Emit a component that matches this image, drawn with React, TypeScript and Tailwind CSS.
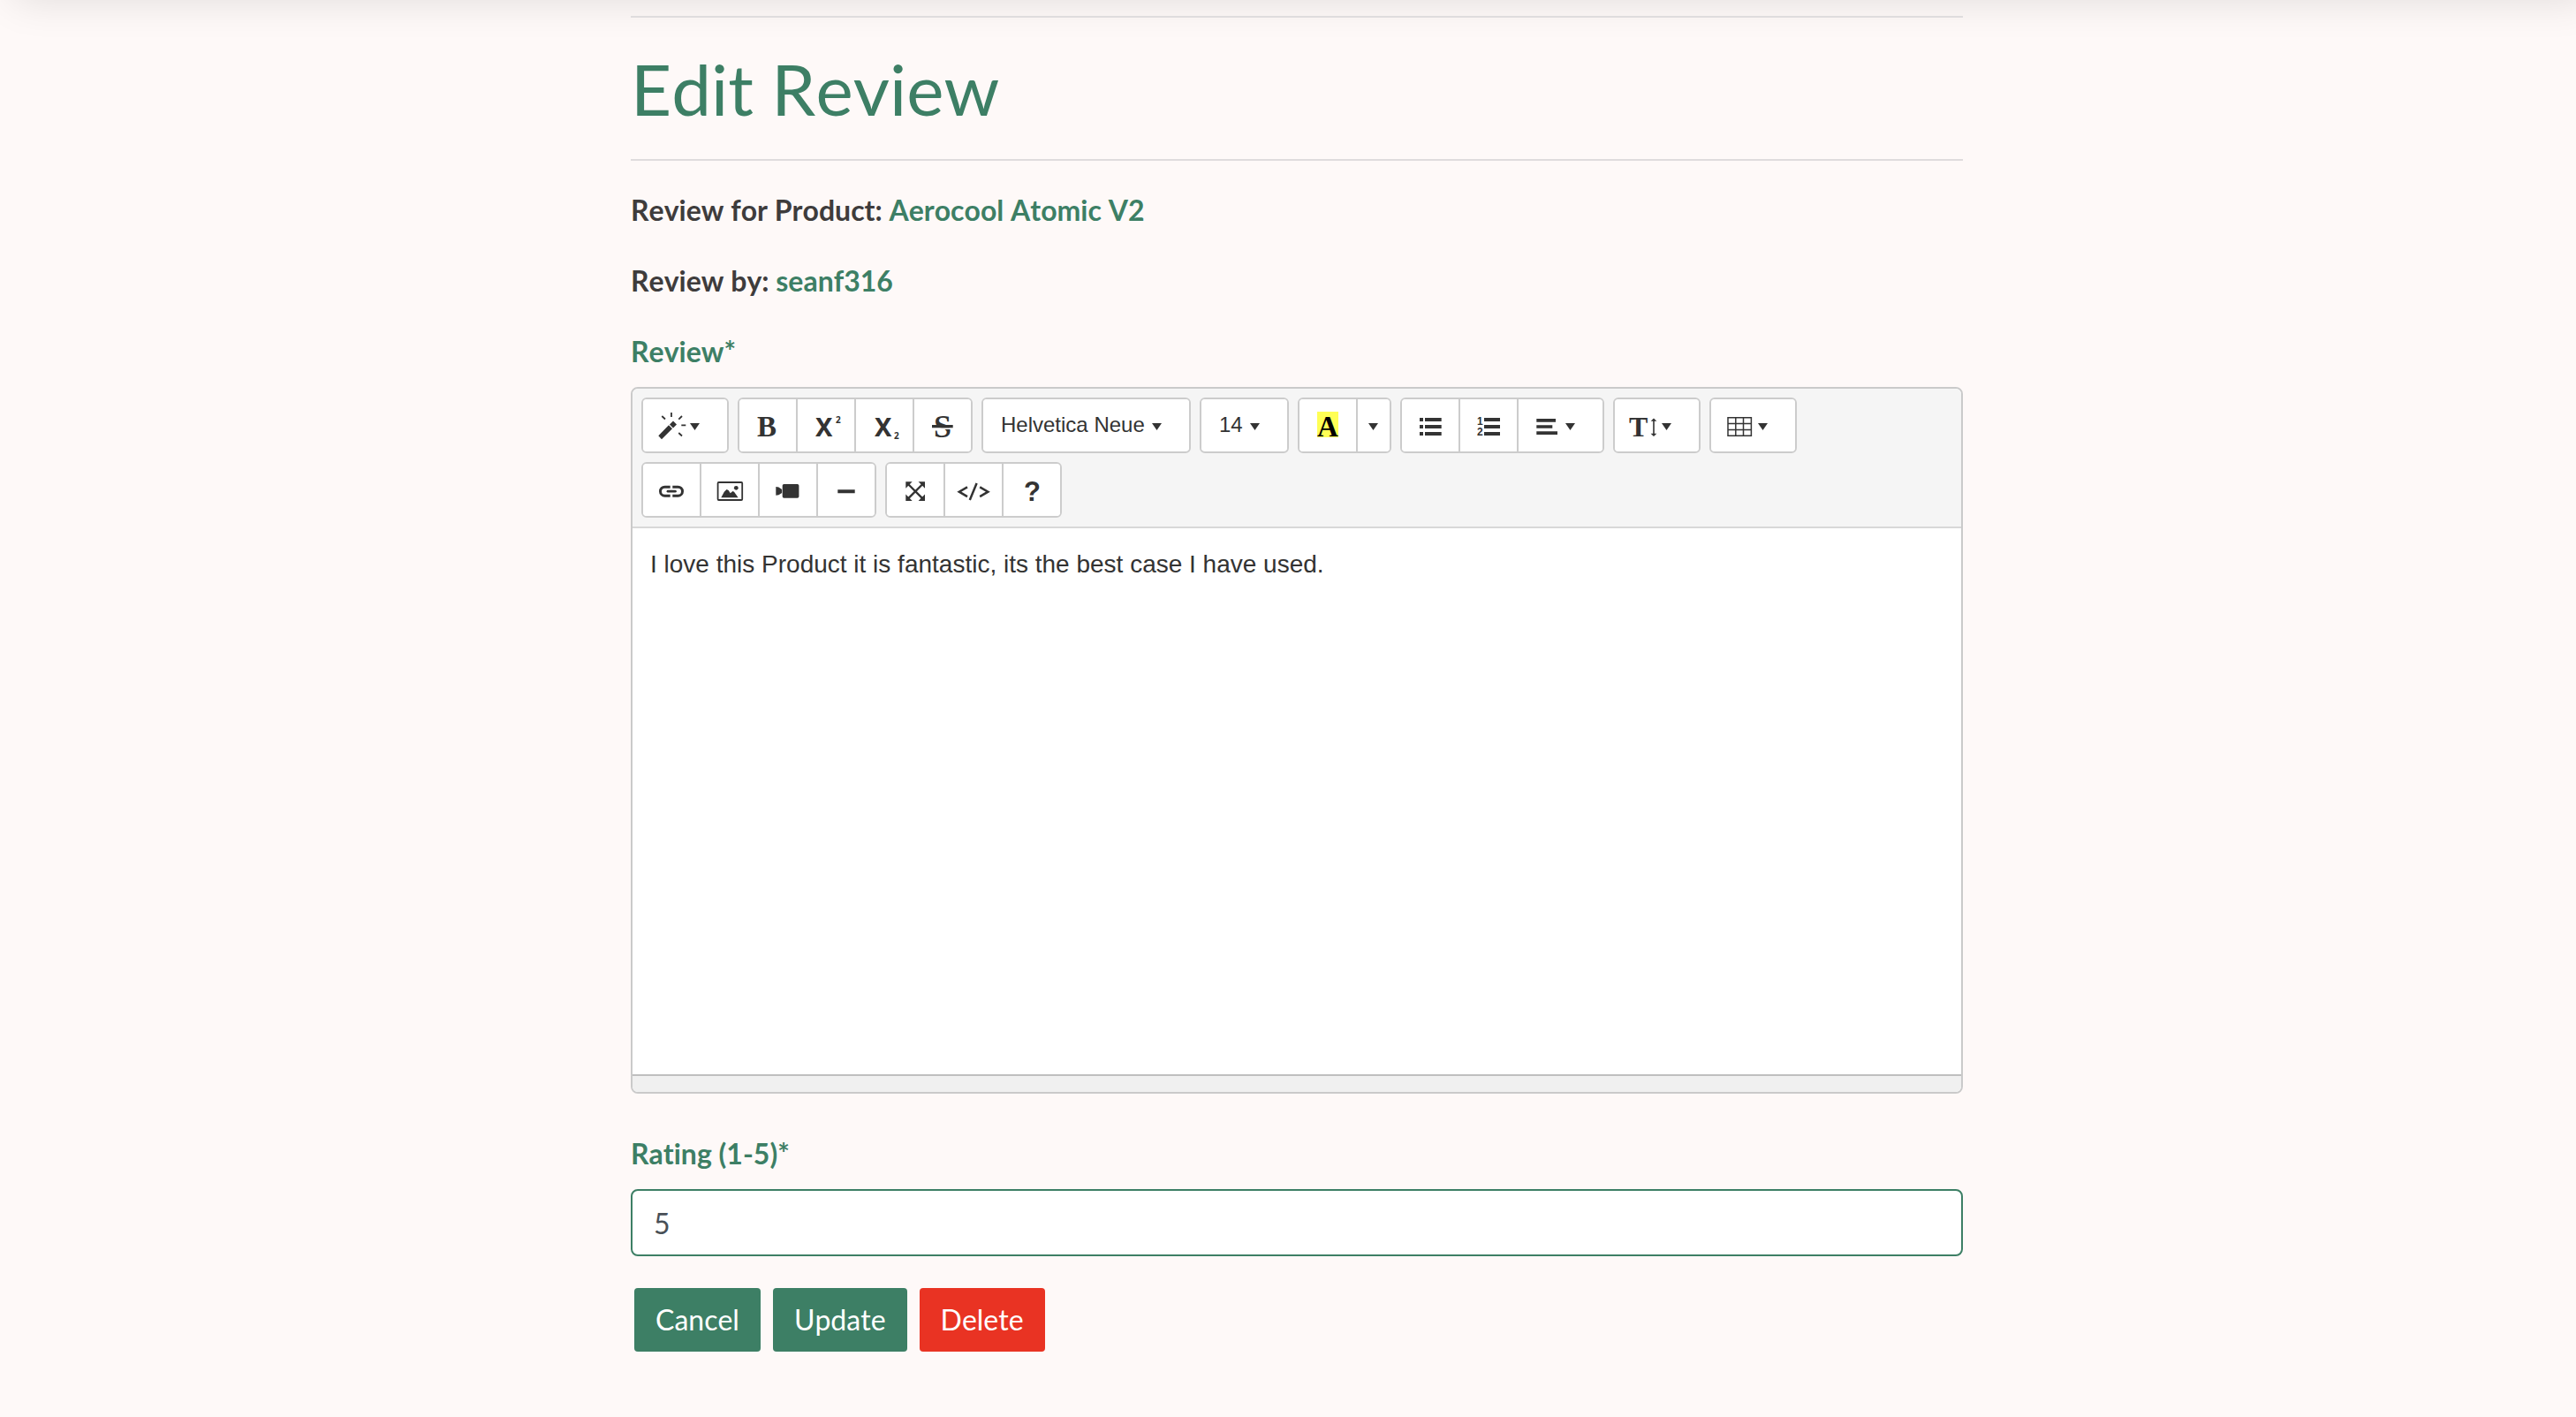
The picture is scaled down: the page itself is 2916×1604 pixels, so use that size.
import { useState, type ReactNode } from "react";

const INK = "#333333";

function Glyph({ wide, children }: { wide?: boolean; children: ReactNode }) {
  return (
    <svg
      aria-hidden="true"
      viewBox={wide ? "0 0 95 59" : "0 0 64 59"}
      className={wide ? "block h-[59px] w-[95px]" : "block h-[59px] w-16"}
      fill={INK}
      stroke="none"
    >
      {children}
    </svg>
  );
}

function Caret({ x = 53 }: { x?: number }) {
  return <path d={`M${x} 27h11l-5.5 8z`} />;
}

function Tool({ label, menu, children }: { label: string; menu?: boolean; children: ReactNode }) {
  return (
    <button type="button" aria-label={label} aria-haspopup={menu ? "menu" : undefined} className="bg-white hover:bg-gray-100">
      {children}
    </button>
  );
}

function Group({ children }: { children: ReactNode }) {
  return (
    <div className="flex h-[63px] divide-x-2 divide-[#cccccc] overflow-hidden rounded-md border-2 border-[#cccccc] bg-white">
      {children}
    </div>
  );
}

function PickList({ label, options, width }: { label: string; options: string[]; width: string }) {
  return (
    <div className={`relative ${width}`}>
      <select
        aria-label={label}
        className="h-[57px] w-full appearance-none bg-white pl-5 font-['Liberation_Sans',Arial,sans-serif] text-2xl text-[#333333]"
      >
        {options.map((o) => (
          <option key={o}>{o}</option>
        ))}
      </select>
      <svg aria-hidden="true" viewBox="0 0 11 8" className="pointer-events-none absolute top-[27px] right-[31px] h-2 w-[11px]" fill={INK}>
        <path d="M0 0h11l-5.5 8z" />
      </svg>
    </div>
  );
}

const serif = "'Liberation Serif', 'Times New Roman', serif";
const sans = "'Liberation Sans', Arial, sans-serif";
const heavy = "'Noto Sans', sans-serif";

function Toolbar() {
  return (
    <div role="toolbar" aria-label="Formatting" className="flex flex-wrap gap-2.5 border-b-2 border-[#d8d8d8] bg-[#f5f5f5] p-2.5">
      <Group>
        <Tool label="Style" menu>
          <Glyph wide>
            <path d="M17.3 41.2 29 29.3l4 4L21 45.3z" />
            <path d="M34 24.5l4 4-4 4-4-4z" />
            <path
              d="M32 15v5M21.3 19l3.7 3.5M44 19l-3.7 3.7M43.3 29.3h5M40.3 38l3.7 3.5"
              stroke={INK}
              strokeWidth="1.8"
              fill="none"
            />
            <Caret />
          </Glyph>
        </Tool>
      </Group>
      <Group>
        <Tool label="Bold">
          <Glyph>
            <text x="20" y="42" fontFamily={serif} fontWeight="700" fontSize="33">B</text>
          </Glyph>
        </Tool>
        <Tool label="Superscript">
          <Glyph>
            <text x="20" y="42" fontFamily={heavy} fontWeight="700" fontSize="29">X</text>
            <text x="43" y="27" fontFamily={heavy} fontWeight="700" fontSize="10">2</text>
          </Glyph>
        </Tool>
        <Tool label="Subscript">
          <Glyph>
            <text x="21" y="42" fontFamily={heavy} fontWeight="700" fontSize="29">X</text>
            <text x="43" y="45" fontFamily={heavy} fontWeight="700" fontSize="10">2</text>
          </Glyph>
        </Tool>
        <Tool label="Strikethrough">
          <Glyph>
            <text x="22" y="43" fontFamily={serif} fontWeight="700" fontSize="36">S</text>
            <path d="M20 32.3h24v1.7H20z" fill="#ffffff" />
            <path d="M20 29h23.7v3.3H20z" />
          </Glyph>
        </Tool>
      </Group>
      <Group>
        <PickList label="Font family" width="w-[233px]" options={["Helvetica Neue", "Arial", "Courier New", "Times New Roman"]} />
      </Group>
      <Group>
        <PickList label="Font size" width="w-[97px]" options={["14", "16", "18", "24", "36"]} />
      </Group>
      <Group>
        <Tool label="Highlight color">
          <Glyph>
            <path d="M20 14h24v29H20z" fill="#ffff55" />
            <text x="20" y="42" fontFamily={serif} fontWeight="700" fontSize="33" fill="#000000">A</text>
          </Glyph>
        </Tool>
        <Tool label="More colors" menu>
          <svg aria-hidden="true" viewBox="0 0 36 59" className="block h-[59px] w-9" fill={INK}>
            <Caret x={12} />
          </svg>
        </Tool>
      </Group>
      <Group>
        <Tool label="Unordered list">
          <Glyph>
            <path d="M20 21h4v4h-4zM20 29h4v4h-4zM20 37h4v4h-4zM26 21h18.7v4H26zM26 29h18.7v4H26zM26 37h18.7v4H26z" />
          </Glyph>
        </Tool>
        <Tool label="Ordered list">
          <Glyph>
            <text x="19" y="29" fontFamily={sans} fontWeight="700" fontSize="12">1</text>
            <text x="19" y="41" fontFamily={sans} fontWeight="700" fontSize="12">2</text>
            <path d="M27 21h18v4H27zM27 29h18v4H27zM27 37h18v4H27z" />
          </Glyph>
        </Tool>
        <Tool label="Paragraph" menu>
          <Glyph wide>
            <path d="M20.3 22H42v3.7H20.3zM20.3 29.2h18v3.6h-18zM20.3 36.2H44V40H20.3z" />
            <Caret />
          </Glyph>
        </Tool>
      </Group>
      <Group>
        <Tool label="Line height" menu>
          <Glyph wide>
            <text x="16" y="42" fontFamily={serif} fontWeight="700" fontSize="32">T</text>
            <path d="M44 23v17" stroke={INK} strokeWidth="1.6" />
            <path d="M44 21.5l3.4 3.3h-6.8zM44 42l3.4-3.3h-6.8z" />
            <Caret />
          </Glyph>
        </Tool>
      </Group>
      <Group>
        <Tool label="Table" menu>
          <Glyph wide>
            <path
              d="M19 20.7h26.4v20.6H19zM27.8 20.7v20.6M36.5 20.7v20.6M19 27.6h26.4M19 34.4h26.4"
              fill="none"
              stroke={INK}
              strokeWidth="1.5"
            />
            <Caret />
          </Glyph>
        </Tool>
      </Group>
      <Group>
        <Tool label="Link">
          <Glyph>
            <path
              d="M30.7 26.2h-6.2a5 5 0 0 0 0 10h6.2M33.3 26.2h6.2a5 5 0 0 1 0 10h-6.2"
              fill="none"
              stroke={INK}
              strokeWidth="3"
            />
            <path d="M28 31.2h8.4" stroke={INK} strokeWidth="2.8" strokeLinecap="round" />
          </Glyph>
        </Tool>
        <Tool label="Picture">
          <Glyph>
            <rect x="18.6" y="21" width="27.6" height="20" rx="1" fill="none" stroke={INK} strokeWidth="1.8" />
            <circle cx="39.3" cy="27.3" r="2.4" />
            <path d="M22.3 38.3l3.5-6.6 2.8-2.8 2 1 2.2 3.4 2.6-2.4 1.6.8 4.6 6.6z" />
          </Glyph>
        </Tool>
        <Tool label="Video">
          <Glyph>
            <rect x="25.7" y="23" width="18.7" height="15.7" rx="1.8" />
            <path d="M18.3 26l3.2.6 3.6 2.4v4l-3.6 2.2-3.2.6z" />
          </Glyph>
        </Tool>
        <Tool label="Horizontal rule">
          <Glyph>
            <path d="M22.3 29.2h19.4v4H22.3z" />
          </Glyph>
        </Tool>
      </Group>
      <Group>
        <Tool label="Full screen">
          <Glyph>
            <path d="M24 23l16.4 16.4M40.4 23L24 39.4" stroke={INK} strokeWidth="2.4" />
            <path d="M21.3 20.3h7.4l-7.4 7.4zM43 20.3v7.4l-7.4-7.4zM21.3 42v-7.4l7.4 7.4zM43 42h-7.4l7.4-7.4z" />
          </Glyph>
        </Tool>
        <Tool label="Code view">
          <Glyph>
            <path d="M25 26.3l-9.2 5.4 9.2 5.4M39.2 26.3l9.2 5.4-9.2 5.4M35.6 22l-7.8 19" fill="none" stroke={INK} strokeWidth="2.5" />
          </Glyph>
        </Tool>
        <Tool label="Help">
          <Glyph>
            <text x="23" y="42" fontFamily={sans} fontWeight="700" fontSize="31">?</text>
          </Glyph>
        </Tool>
      </Group>
    </div>
  );
}

export default function App() {
  const [review, setReview] = useState("I love this Product it is fantastic, its the best case I have used.");
  const [rating, setRating] = useState("5");

  return (
    <div className="flex min-h-screen flex-col overflow-hidden bg-[#fef9f8] font-['Lato',sans-serif] text-[32px] leading-[48px] text-[#3e3c3c] [font-kerning:none] [font-variant-ligatures:none]">
      <header className="-mt-20 h-20 shadow-[16px_0_48px_rgba(0,0,0,0.12)]" />
      <main className="w-full pt-[18px] pl-5">
        <div className="mx-auto w-full max-w-[1508px]">
          <hr className="border-t-2 border-[#dfdcdd]" />
          <h1 className="my-8 text-[80px] leading-[96px] text-[#3d7f65]">Edit Review</h1>
          <hr className="mb-8 border-t-2 border-[#dfdcdd]" />
          <p className="mb-8 font-bold">
            Review for Product: <a href="#product" className="text-[#3d7f65]">Aerocool Atomic V2</a>
          </p>
          <p className="mb-8 font-bold">
            Review by: <a href="#user" className="text-[#3d7f65]">seanf316</a>
          </p>
          <form onSubmit={(e) => e.preventDefault()}>
            <label htmlFor="review" className="mb-4 block font-bold text-[#3d7f65]">Review*</label>
            <div className="overflow-hidden rounded-lg border-2 border-[#cacaca] bg-white">
              <Toolbar />
              <textarea
                id="review"
                spellCheck={false}
                value={review}
                onChange={(e) => setReview(e.target.value)}
                className="block h-[618px] w-full resize-none bg-white p-5 font-['Liberation_Sans',Arial,sans-serif] text-[28px] leading-[42px] text-[#333333] outline-none"
              />
              <div className="h-5 border-t-2 border-[#bfbfbf] bg-[#f0f0f0]" />
            </div>
            <label htmlFor="rating" className="mt-11 mb-4 block font-bold text-[#3d7f65]">Rating (1-5)*</label>
            <input
              id="rating"
              type="number"
              min={1}
              max={5}
              value={rating}
              onChange={(e) => setRating(e.target.value)}
              className="block h-[76px] w-full rounded-lg border-2 border-[#3d7f65] bg-white px-6 text-[#495057] outline-none"
            />
            <div className="mt-9 flex gap-3.5 px-1 pb-12 text-white">
              <button type="button" className="h-[72px] rounded-sm bg-[#3d7f65] px-6">Cancel</button>
              <button type="submit" className="h-[72px] rounded-sm bg-[#3d7f65] px-6">Update</button>
              <button type="button" className="h-[72px] rounded-sm bg-[#e93323] px-6">Delete</button>
            </div>
          </form>
        </div>
      </main>
    </div>
  );
}
